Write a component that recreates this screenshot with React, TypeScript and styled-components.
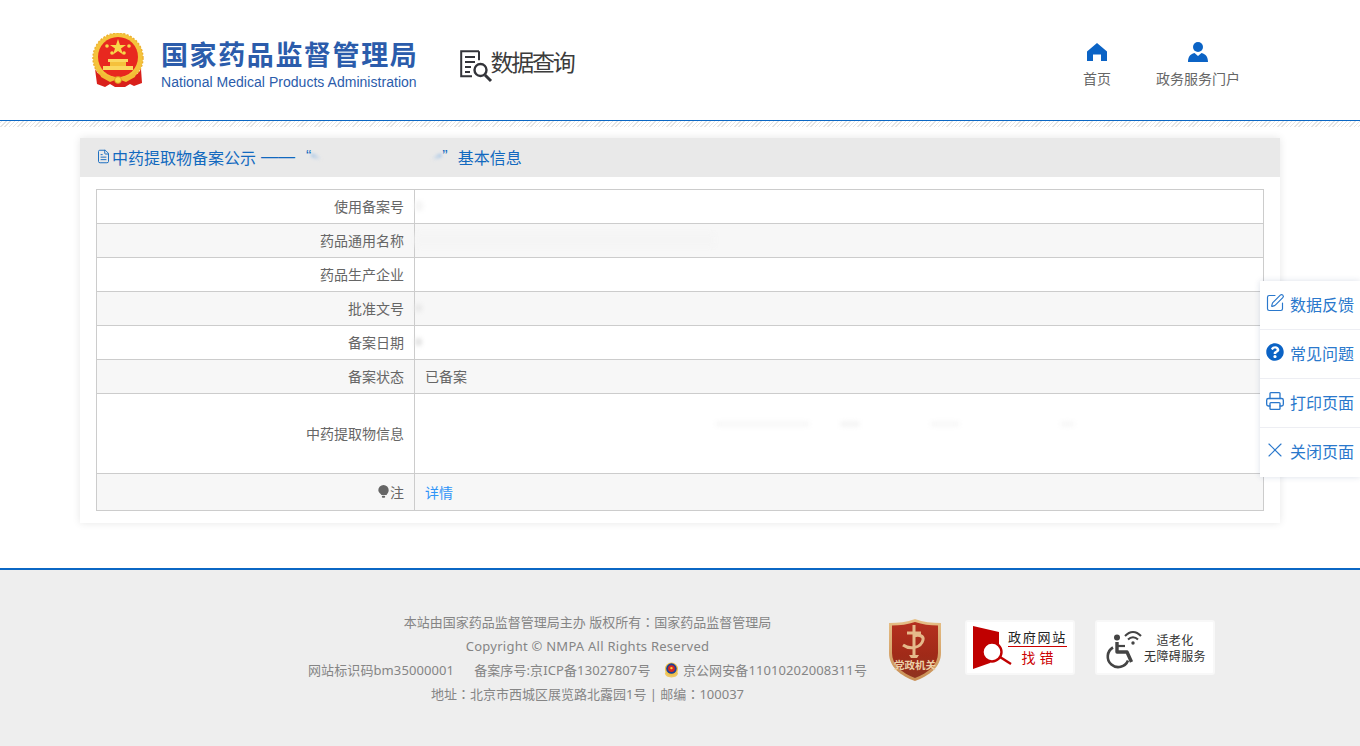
import React from 'react';
import styled, {createGlobalStyle} from 'styled-components';
import {FileText, Printer, SquarePen, X} from 'lucide-react';
import {FaQuestionCircle} from 'react-icons/fa';

const FONT = '"Noto Sans CJK SC", "Noto Sans", sans-serif';

const Global = createGlobalStyle`
  html, body { margin: 0; padding: 0; background: #fff; }
  body { font-family: ${FONT}; color: #666; }
  * { box-sizing: border-box; }
`;

const Page = styled.div`
  position: relative;
  width: 1360px;
  height: 746px;
  overflow: hidden;
  display: flex;
  flex-direction: column;
`;

const Header = styled.header`
  height: 121px;
  flex: none;
  padding: 33px 120px 0 92px;
  display: flex;
  align-items: flex-start;
  border-bottom: 1px solid #0b67c4;
`;

const Hatch = styled.div`
  height: 6px;
  flex: none;
  background: repeating-linear-gradient(135deg, #fff 0 1px, #e4e4e4 1px 2px, #fff 2px 3px);
`;

const Brand = styled.div`
  display: flex;
  align-items: flex-start;
  gap: 17px;
`;

const BrandText = styled.div`
  padding-top: 3px;
`;

const BrandName = styled.div`
  font-size: 27px;
  line-height: 36px;
  margin-bottom: 2px;
  font-weight: 700;
  color: #2b5cab;
  letter-spacing: 1.6px;
  white-space: nowrap;
`;

const BrandEn = styled.div`
  font-family: "Liberation Sans", Arial, sans-serif;
  font-size: 14px;
  line-height: 16px;
  letter-spacing: 0.03px;
  color: #2b5cab;
  white-space: nowrap;
`;

const QueryTitle = styled.div`
  margin: 12px 0 0 42px;
  display: flex;
  align-items: flex-start;
  color: #3c3c3c;
  font-size: 23px;
  line-height: 32px;
  letter-spacing: -2.2px;
  white-space: nowrap;
`;

const QueryIconSlot = styled.span`
  margin: 5px -3px 0 0;
  display: block;
`;

const Nav = styled.nav`
  margin-left: auto;
  padding-top: 8px;
  display: flex;
  gap: 45px;
`;

const NavItem = styled.a`
  display: flex;
  flex-direction: column;
  align-items: center;
  gap: 4px;
  font-size: 14px;
  line-height: 22px;
  color: #666;
`;

const NavIcon = styled.span`
  height: 22px;
  display: flex;
  align-items: center;
`;

const Main = styled.main`
  flex: 1;
  padding: 11px 80px 0;
`;

const Card = styled.section`
  height: 385px;
  background: #fff;
  box-shadow: 0 0 8px rgba(0, 0, 0, 0.1);
`;

const CardTitle = styled.h2`
  margin: 0;
  height: 39px;
  padding: 0 0 2px 16px;
  display: flex;
  align-items: center;
  background: #e9e9e9;
  color: #1269bf;
  font-size: 16px;
  font-weight: 400;
  white-space: nowrap;
`;

const TitleIcon = styled.span`
  margin-right: 1px;
  display: flex;
`;

const TitleMark = styled.span`
  font-family: "Liberation Sans", Arial, sans-serif;
  margin-left: ${p => p.$left}px;
`;

const TitleDash = styled(TitleMark)`
  font-size: 17px;
`;

const TitleGap = styled.span`
  width: 111px;
`;

const TitleSmudge = styled.i`
  display: block;
  width: 10px;
  height: 4px;
  background: linear-gradient(90deg, #a9c7e6, rgba(169, 199, 230, 0));
  filter: blur(1.5px);
  transform: rotate(${p => p.$flip ? '-25deg' : '25deg'}) scaleX(${p => p.$flip ? -1 : 1});
`;

const TableWrap = styled.div`
  padding: 12px 16px 0;
`;

const Table = styled.table`
  width: 100%;
  border-collapse: collapse;
  table-layout: fixed;
  border: 1px solid #ccc;
  font-size: 14px;
`;

const Row = styled.tr`
  height: ${p => p.$h || 34}px;
  background: ${p => p.$alt ? '#f7f7f7' : '#fff'};
`;

const Label = styled.th`
  width: 318px;
  padding: 0 10px ${p => p.$flat ? 0 : 2}px;
  border: 1px solid #ccc;
  text-align: right;
  font-weight: 400;
  color: #666;
  line-height: 20px;
`;

const Value = styled.td`
  padding: 0 10px ${p => p.$flat ? 0 : 2}px;
  border: 1px solid #ccc;
  color: #666;
  line-height: 20px;
`;

const Smudge = styled.i`
  display: block;
  width: ${p => p.$w}px;
  height: ${p => p.$h || 6}px;
  margin-left: ${p => p.$x || 0}px;
  background: ${p => p.$c || '#f8f8f8'};
  border-radius: 3px;
  filter: blur(2px);
`;

const SmudgeRow = styled.div`
  margin: ${p => p.$up || 0}px 0 0 -10px;
  display: flex;
  align-items: center;
`;

const NoteLabel = styled.span`
  display: inline-flex;
  align-items: center;
  gap: 1px;
`;

const DetailLink = styled.a`
  color: #2f95f7;
`;

const Footer = styled.footer`
  height: 178px;
  flex: none;
  border-top: 2px solid #0b67c4;
  background: #eee;
  padding: 40px 0 0 308px;
  display: flex;
  align-items: flex-start;
`;

const FooterText = styled.div`
  width: 559px;
  font-family: "Noto Sans", "Noto Sans CJK SC", sans-serif;
  font-size: 13px;
  line-height: 24px;
  text-align: center;
  color: #858585;
  white-space: nowrap;
`;

const FooterLine = styled.div`
  height: 24px;
  display: flex;
  justify-content: center;
  align-items: center;
  letter-spacing: ${p => p.$spread || 0}px;
`;

const Colon = styled.span`
  font-family: "Noto Sans CJK TC", sans-serif;
`;

const IcpLink = styled.span`
  margin: 0 12px 0 20px;
`;

const Badges = styled.div`
  margin: 9px 0 0 22px;
  display: flex;
  align-items: flex-start;
`;

const BadgeCard = styled.div`
  width: ${p => p.$w}px;
  height: 55px;
  margin: 1px 0 0 ${p => p.$gap}px;
  background: #fff;
  border: 2px solid #f8f8f8;
  border-radius: 3px;
  display: flex;
  align-items: center;
`;

const FindTexts = styled.div`
  margin-left: -4px;
  width: 59px;
  text-align: center;
  white-space: nowrap;
`;

const FindTop = styled.div`
  font-size: 13px;
  line-height: 17px;
  letter-spacing: 1.7px;
  color: #222;
  border-bottom: 1px solid #c00;
  padding-bottom: 1px;
`;

const FindBottom = styled.div`
  font-size: 14px;
  line-height: 20px;
  letter-spacing: 4px;
  color: #c00;
  padding-left: 4px;
`;

const AccessTexts = styled.div`
  font-size: 12px;
  line-height: 16px;
  letter-spacing: 0.4px;
  color: #333;
  text-align: center;
  white-space: nowrap;
`;

const Side = styled.aside`
  position: absolute;
  top: 281px;
  right: 0;
  width: 100px;
  background: #fff;
  box-shadow: 0 0 6px rgba(40, 60, 120, 0.16);
`;

const SideItem = styled.a`
  height: 49px;
  padding: 0 6px 2px;
  display: flex;
  align-items: center;
  gap: 6px;
  color: #2a78cc;
  font-size: 16px;
  white-space: nowrap;
  border-bottom: 1px solid ${p => p.$last ? 'transparent' : '#edeef3'};
`;

const SideIcon = styled.span`
  width: 18px;
  height: 18px;
  flex: none;
  display: flex;
  align-items: center;
  justify-content: center;
  margin-top: -3px;
  svg { flex: none; }
`;

function Emblem() {
  return (
    <svg width="52" height="56" viewBox="0 0 52 56">
      <circle cx="26" cy="25" r="25" fill="#f4c33c" />
      <circle cx="26" cy="25" r="25" fill="none" stroke="#eeb02e" strokeDasharray="2 1.5" strokeWidth="1.4" />
      <circle cx="26" cy="24" r="20" fill="#e8281f" />
      <polygon fill="#f8d84a" points="26,6 28,12 34,12 29,15.5 31,21.5 26,18 21,21.5 23,15.5 18,12 24,12" />
      <circle cx="15" cy="13" r="1.8" fill="#f8d84a" />
      <circle cx="37" cy="13" r="1.8" fill="#f8d84a" />
      <circle cx="20" cy="20" r="1.8" fill="#f8d84a" />
      <circle cx="32" cy="20" r="1.8" fill="#f8d84a" />
      <rect x="16" y="26" width="20" height="3" fill="#fbd860" />
      <rect x="18" y="29" width="16" height="4" fill="#f5c13c" />
      <rect x="11" y="33" width="30" height="4" fill="#fbd860" />
      <path d="M3 36c3 6 9 11 23 11s20-5 23-11l1 14-8 3-4-2-5 3H23l-5-3-5 3-8-3z" fill="#d9201b" />
      <path d="M7 36c4 6 9 8 19 8s15-2 19-8l-2 8-9 5-8-3-8 3-9-5z" fill="#f2bc35" />
      <circle cx="26" cy="47" r="3.4" fill="#f8d84a" stroke="#d9901b" strokeWidth=".8" />
    </svg>
  );
}

function QueryIcon() {
  return (
    <svg width="33" height="33" viewBox="0 0 33 33" fill="none" stroke="#33343a" style={{display: 'block'}}>
      <path d="M19 1.2H1.2v25H12" strokeWidth="2" />
      <path d="M19 1.2v9" strokeWidth="2" />
      <path d="M5 7h10M5 12h10M5 17h6M5 22h5" strokeWidth="1.8" />
      <circle cx="20.5" cy="20" r="6" strokeWidth="2.4" />
      <path d="M25 25l6 6" strokeWidth="3" />
    </svg>
  );
}

function HomeIcon() {
  return (
    <svg width="20" height="18" viewBox="0 0 20 18">
      <path fill="#0b63c5" d="M10 0 20 8.4V18h-6v-6.5H6V18H0V8.4z" />
    </svg>
  );
}

function UserIcon() {
  return (
    <svg width="20" height="20" viewBox="0 0 20 20">
      <circle cx="10" cy="5" r="5" fill="#0b63c5" />
      <path fill="#0b63c5" d="M0 20c0-5 2-8 6.5-9L10 14l3.500-3c4.500 1 6.500 4 6.500 9z" />
    </svg>
  );
}

function Bulb() {
  return (
    <svg width="11" height="13" viewBox="0 0 11 13">
      <path fill="#666" d="M5.500 0a5.200 5.200 0 0 1 5.200 5.200c0 2.200-1.500 3.300-2.200 4.800H3.500C2.800 8.500 .3 7.400 .3 5.200A5.200 5.200 0 0 1 5.500 0z" />
      <rect x="3.800" y="10.700" width="3.400" height="2" rx="1" fill="#666" />
    </svg>
  );
}

function PoliceBadge() {
  return (
    <svg width="18" height="18" viewBox="0 0 18 18">
      <path fill="#eec766" d="M2 12c1-2 13-2 14 0 0 3-3 5-7 5s-7-2-7-5z" />
      <circle cx="9" cy="8" r="7" fill="#f0c24a" />
      <circle cx="9" cy="7.500" r="5.600" fill="#1c3f94" />
      <circle cx="9" cy="7.500" r="3.600" fill="#d8261f" />
      <circle cx="9" cy="7" r="1.300" fill="#f7d23e" />
    </svg>
  );
}

function PartyShield() {
  return (
    <svg width="52" height="62" viewBox="0 0 52 62">
      <defs>
        <linearGradient id="rim" x1="0" y1="0" x2="0" y2="1">
          <stop offset="0" stopColor="#e6bf86" />
          <stop offset="1" stopColor="#c98f55" />
        </linearGradient>
        <linearGradient id="fill" x1="0" y1="0" x2="0" y2="1">
          <stop offset="0" stopColor="#b5301f" />
          <stop offset=".6" stopColor="#a02a18" />
          <stop offset="1" stopColor="#8f3420" />
        </linearGradient>
      </defs>
      <path fill="url(#rim)" d="M26 0c8 3 17 4 26 4v30c0 14-12 23-26 28C12 57 0 48 0 34V4c9 0 18-1 26-4z" />
      <path fill="url(#fill)" d="M26 3c7 2.500 15 3.500 23 3.600V34c0 12-10 20-23 25C13 54 3 46 3 34V6.600C11 6.500 19 5.500 26 3z" />
      <path fill="none" stroke="#e5b98a" strokeWidth="3" d="M25 6v30M18 14h14M14 26c7 5 18 3 20-5 1-4-4-6-9-4" />
      <path fill="#e5b98a" d="M20 36h10l-2 3h-6z" />
      <text x="26" y="50" textAnchor="middle" fontSize="10.500" fontWeight="700" fill="#ecd0a8" fontFamily={FONT}>党政机关</text>
    </svg>
  );
}

function FindMark() {
  return (
    <svg width="40" height="46" viewBox="0 0 40 46" style={{marginLeft: 5}}>
      <path fill="#c00000" d="M1 1 27 7v12L18 38 1 44z" />
      <circle cx="20" cy="27" r="9.500" fill="#fff" stroke="#c00000" strokeWidth="2.400" />
      <path d="M28 32l11 7" stroke="#c00000" strokeWidth="2.400" />
    </svg>
  );
}

function WheelchairIcon() {
  return (
    <svg width="36" height="38" viewBox="0 0 36 38" style={{marginLeft: 11, overflow: 'visible'}}>
      <circle cx="9" cy="8.500" r="3" fill="#444" />
      <path d="M9 13v10h10l4.500 10" fill="none" stroke="#444" strokeWidth="3.400" strokeLinejoin="round" />
      <path d="M10 17h7" stroke="#444" strokeWidth="2.200" />
      <path d="M5 18.500a10.500 10.500 0 1 0 15 13" fill="none" stroke="#444" strokeWidth="2.600" />
      <path d="M17 7c5-5.500 11-5.500 16 0M20 10.500c3-3 7-3 10 0" fill="none" stroke="#444" strokeWidth="2" />
      <circle cx="25" cy="14" r="1.700" fill="#444" />
    </svg>
  );
}

const rows = [
  {label: '使用备案号', smudge: <Smudge $w={8} $h={10} $c="#f5f5f5" />},
  {label: '药品通用名称', smudge: <Smudge $w={300} $h={14} $c="#f5f5f5" />},
  {label: '药品生产企业'},
  {label: '批准文号', smudge: <Smudge $w={7} $h={8} $c="#e8e8e8" />},
  {label: '备案日期', smudge: <Smudge $w={7} $h={8} $c="#e2e2e2" />},
  {label: '备案状态', value: '已备案'},
];

function App() {
  return (
    <Page>
      <Global />
      <Header>
        <Brand>
          <Emblem />
          <BrandText>
            <BrandName>国家药品监督管理局</BrandName>
            <BrandEn>National Medical Products Administration</BrandEn>
          </BrandText>
        </Brand>
        <QueryTitle>
          <QueryIconSlot>
            <QueryIcon />
          </QueryIconSlot>
          <span>数据查询</span>
        </QueryTitle>
        <Nav>
          <NavItem>
            <NavIcon>
              <HomeIcon />
            </NavIcon>
            首页
          </NavItem>
          <NavItem>
            <NavIcon>
              <UserIcon />
            </NavIcon>
            政务服务门户
          </NavItem>
        </Nav>
      </Header>
      <Hatch />
      <Main>
        <Card>
          <CardTitle>
            <TitleIcon>
              <FileText size={15} strokeWidth={1.5} />
            </TitleIcon>
            中药提取物备案公示
            <TitleDash $left={5}>——</TitleDash>
            <TitleMark $left={11}>“</TitleMark>
            <TitleSmudge />
            <TitleGap />
            <TitleSmudge $flip />
            <TitleMark $left={0}>”</TitleMark>
            <TitleMark $left={10} />
            基本信息
          </CardTitle>
          <TableWrap>
            <Table>
              <tbody>
                {rows.map((r, i) => (
                  <Row key={r.label} $alt={i % 2 === 1}>
                    <Label>{r.label}</Label>
                    <Value>
                      {r.value}
                      {r.smudge && <SmudgeRow>{r.smudge}</SmudgeRow>}
                    </Value>
                  </Row>
                ))}
                <Row $h={80}>
                  <Label>中药提取物信息</Label>
                  <Value>
                    <SmudgeRow $up={-12}>
                      <Smudge $w={95} $x={300} />
                      <Smudge $w={20} $x={30} $c="#f5f5f5" />
                      <Smudge $w={30} $x={70} />
                      <Smudge $w={15} $x={100} />
                    </SmudgeRow>
                  </Value>
                </Row>
                <Row $h={37} $alt>
                  <Label $flat>
                    <NoteLabel>
                      <Bulb />注
                    </NoteLabel>
                  </Label>
                  <Value $flat>
                    <DetailLink>详情</DetailLink>
                  </Value>
                </Row>
              </tbody>
            </Table>
          </TableWrap>
        </Card>
      </Main>
      <Footer>
        <FooterText>
          <FooterLine>
            本站由国家药品监督管理局主办 版权所有<Colon>：</Colon>国家药品监督管理局
          </FooterLine>
          <FooterLine $spread={0.25}>Copyright © NMPA All Rights Reserved</FooterLine>
          <FooterLine $spread={0.1}>
            网站标识码bm35000001
            <IcpLink>备案序号:京ICP备13027807号</IcpLink>
            <PoliceBadge />
            &nbsp;京公网安备11010202008311号
          </FooterLine>
          <FooterLine>
            地址<Colon>：</Colon>北京市西城区展览路北露园1号&nbsp;|&nbsp;邮编<Colon>：</Colon>100037
          </FooterLine>
        </FooterText>
        <Badges>
          <PartyShield />
          <BadgeCard $w={110} $gap={24}>
            <FindMark />
            <FindTexts>
              <FindTop>政府网站</FindTop>
              <FindBottom>找错</FindBottom>
            </FindTexts>
          </BadgeCard>
          <BadgeCard $w={120} $gap={20}>
            <WheelchairIcon />
            <AccessTexts>
              适老化
              <br />
              无障碍服务
            </AccessTexts>
          </BadgeCard>
        </Badges>
      </Footer>
      <Side>
        <SideItem>
          <SideIcon>
            <SquarePen size={20} strokeWidth={1.4} />
          </SideIcon>
          数据反馈
        </SideItem>
        <SideItem>
          <SideIcon>
            <FaQuestionCircle size={18} color="#0b63c5" />
          </SideIcon>
          常见问题
        </SideItem>
        <SideItem>
          <SideIcon>
            <Printer size={20} strokeWidth={1.6} />
          </SideIcon>
          打印页面
        </SideItem>
        <SideItem $last>
          <SideIcon>
            <X size={24} strokeWidth={1.1} />
          </SideIcon>
          关闭页面
        </SideItem>
      </Side>
    </Page>
  );
}

export default App;
